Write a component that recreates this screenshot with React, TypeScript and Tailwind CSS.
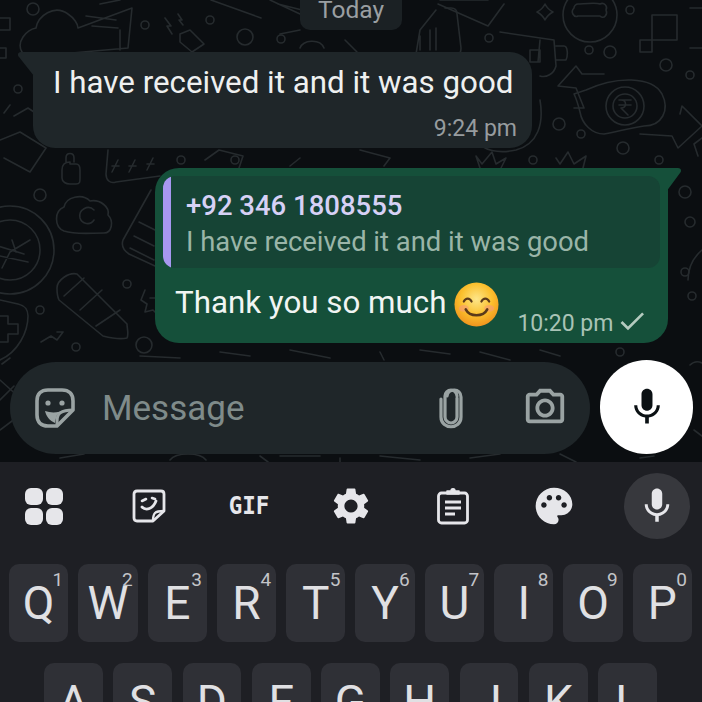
import React from 'react';
import { MdMic, MdOutlineCameraAlt, MdPalette, MdSettings, MdCheck } from 'react-icons/md';

const ROW_ONE = [
  ['Q', '1'], ['W', '2'], ['E', '3'], ['R', '4'], ['T', '5'],
  ['Y', '6'], ['U', '7'], ['I', '8'], ['O', '9'], ['P', '0'],
];
const ROW_TWO = ['A', 'S', 'D', 'F', 'G', 'H', 'J', 'K', 'L'];

const DOT_CIRCLES = [
  [33, 9, 6], [145, 25, 4], [210, 20, 4], [245, 37, 8], [281, 39, 4], [18, 89, 4],
  [181, 160, 4], [235, 160, 4], [40, 195, 6], [77, 247, 4], [127, 284, 4], [40, 310, 4],
  [76, 347, 4], [144, 345, 8], [589, 50, 4], [610, 52, 6], [666, 65, 6], [690, 75, 4],
  [559, 124, 6], [581, 134, 4], [623, 148, 6], [659, 160, 4], [630, 10, 4], [489, 38, 4],
  [685, 192, 6], [690, 222, 5], [685, 272, 4], [692, 296, 4], [533, 160, 4], [620, 352, 4],
];

const Doodles = () => (
  <svg className="absolute inset-0" width="702" height="462" viewBox="0 0 702 462" fill="none" stroke="#262b2e" strokeWidth="1.6" strokeLinecap="round" strokeLinejoin="round">
    {DOT_CIRCLES.map(([cx, cy, r], i) => (
      <circle key={i} cx={cx} cy={cy} r={r} />
    ))}
    {/* top left: squares, heart, gift */}
    <path d="M0 18h10v12H0M0 48h6v10H0" />
    <path d="M22 52c-6-10 4-22 14-24 2-12 18-24 32-14 6 4 10 10 10 14M78 28l54-20-4 40-90 8M86 16l30 4M92 26l26 2M120 30v20M100 4l20-4" />
    {/* bolts and plug */}
    <path d="M165 18l6 8-4 0 5 8M178 14l4 6-3 0 4 5M180 34l10-4 14 14-12 8-12-10z" />
    <path d="M211 0l50 18M270 0l30 14M278 4l24 6M300 30l-20 4" />
    <path d="M300 48c2-8 20-10 24 0M345 40l12 12" />
    {/* left edge card */}
    <path d="M10 105l-6 8M14 116l14-8 6 4 8-6M0 140l20-8 26 16-16 24-26-14" />
    <path d="M70 162c-6 0-8 4-8 8v8c0 4 4 6 8 6h6c4 0 4-2 4-6v-8c0-4-2-6-4-6h-6zM66 162v-4c0-6 8-6 8 0v4" />
    <path d="M108 150l-2 24c0 6 4 10 10 8l44-6M118 160l-6 12M112 166h7M135 160l-6 12M129 166h7M153 158l-6 12M147 164h7" />
    {/* cloud */}
    <path d="M64 231c-10-4-10-20 0-24 2-10 18-14 26-6 10-2 20 6 18 14 6 6 4 18-4 18-14 0-28 2-40-2z" />
    <path d="M94 210c-6-6-16 0-14 8 2 6 10 8 14 2" />
    {/* coin */}
    <circle cx="10" cy="250" r="44" />
    <circle cx="10" cy="250" r="30" />
    <path d="M30 240l-20 12-8 16M12 240l4 12M-2 246l26 8M0 256l28 6" />
    {/* pencil */}
    <path d="M57 288c0-8 12-16 20-14l50 50c0 4 2 10 0 14-8 2-16 0-24-2l-44-36c-2-4-2-8-2-12zM64 296l20-18M80 310l22-20M96 326l24-16" />
    {/* triangle wedge */}
    <path d="M151 190l-28 50c-2 6 0 10 6 14l26 12M139 222l16 8M134 236l20 10M130 248l24 12" />
    <path d="M145 290l-4 10 6 4-2 8 8-2 6 6M150 298l6 0" />
    {/* shield and trend */}
    <path d="M0 300l18 4c8 2 10 6 10 12 0 16-10 36-28 44M0 316h8v8h10v10H8v8H0" />
    <path d="M41 342l10-6 6 4 6-8-6 0" />
    {/* between first bubble and second */}
    <path d="M205 160l14-10 24 6-4 12M360 150l30 8-6 8M300 158l-10 8" />
    <path d="M480 168l-4-12 6 8 10-12 4 12 10-6-6 12" />
    {/* top right */}
    <circle cx="590" cy="15" r="27" />
    <path d="M574 8c-4 4 0 10 4 8l22 0c4 4 8-2 6-6 2-4-2-8-6-6-4-2-18 0-22 0-2 0-4 2-4 4z" />
    <path d="M537 12c4-2 6-4 8-8 2 4 4 6 8 8-4 2-6 4-8 8-2-4-4-6-8-8z" />
    <path d="M640 40h37V15h-25v37h-12zM690 8h14M690 48h12" />
    <path d="M445 8l6 0c4 0 6 2 6 6l4 34c0 8-6 10-10 8M416 54l4-24 16-20M430 50V30M420 50V36M436 50V28" />
    <path d="M440 0l48-0M438 4l50 22 16-22" />
    <path d="M500 32l54 8 2 26c-2 8-10 12-16 10M540 40l-2 22M530 50h10v12h-10zM556 46h8c4 0 4 10 2 14h-10" />
    <path d="M540 100c4 24-2 44-24 50-18 4-34 0-36-8" />
    {/* rupee blob and arrows */}
    <path d="M586 90c30-14 66-14 76 4 8 16 0 32-18 32-14 2-28 6-40 8-12 0-22-10-24-22-2-8-4-14-6-18z" />
    <circle cx="625" cy="106" r="19" />
    <circle cx="625" cy="106" r="12" />
    <path d="M619 100h12M619 105h12M621 100c6 0 6 8 0 8l7 7" />
    <path d="M576 88l-18-2 18-20 6 8h22M576 88l8 20-10 0" />
    <path d="M640 134l32 2 6 12 24-22-20-20-2 8" />
    <path d="M556 158l4 6 8-12 6 12 12-8-4 16" />
    <path d="M702 250a40 40 0 0 0-14 30M702 138l-8 6 4 12" />
    {/* lower strip */}
    <path d="M0 400l14-14M0 380l20 18M10 358l-8 6M0 430l16-12" />
    <path d="M140 356l40 2M220 352l30 4M290 350l40 8M380 352l4 8M420 350l30 4M480 352l30 8M540 350l20 6" />
    <path d="M60 458l24-4M170 460c6-8 30-8 36 0M260 456l8 6M280 456l40 0M340 458v4M380 456l40 4M470 458l30-4M560 454l16 8M640 458l14-2" />
    <path d="M690 365c4-4 8-4 12-2M694 430l8 6" />
  </svg>
);

const Tail = ({ d, className }: { d: string; className: string }) => (
  <svg className={className} width="16" height="24" viewBox="0 0 16 24">
    <path d={d} fill="currentColor" />
  </svg>
);

const StickerFace = () => (
  <svg width="42" height="42" viewBox="0 0 42 42" fill="none" stroke="#9aa3a3" strokeWidth="3.6" strokeLinejoin="round">
    <path d="M14 3h14c7 0 11 4 11 11v9L23 39h-9C7 39 3 35 3 28V14C3 7 7 3 14 3z" />
    <path d="M23 39c0-8 0-10 3-13 3-2 6-3 13-3" strokeWidth="3" />
    <path d="M11 24c6 2 12 2 22-1-2 2-8 3-10 5-1 3-2 6-2 8-5-2-9-7-10-12z" fill="#9aa3a3" stroke="none" />
    <circle cx="14" cy="16" r="2.6" fill="#9aa3a3" stroke="none" />
    <circle cx="28" cy="16" r="2.6" fill="#9aa3a3" stroke="none" />
  </svg>
);

const Clip = () => (
  <svg width="28" height="42" viewBox="0 0 28 42" fill="none" stroke="#9aa3a3" strokeWidth="3.2" strokeLinecap="round">
    <path d="M20 11v19a6 6 0 0 1-12 0V9a6 6 0 0 1 12 0" />
    <path d="M4 12v18c0 13 20 13 20 0V10c0-9-13-9-14-1" />
  </svg>
);

const GridIcon = () => (
  <div className="grid grid-cols-2 gap-[3px] w-[38px]">
    <span className="h-[17px] rounded-[6px] bg-[#e6e6ea]" />
    <span className="h-[17px] rounded-[6px] bg-[#e6e6ea]" />
    <span className="h-[17px] rounded-[6px] bg-[#e6e6ea]" />
    <span className="h-[17px] rounded-[6px] bg-[#e6e6ea]" />
  </div>
);

const NoteIcon = () => (
  <svg width="34" height="34" viewBox="0 0 34 34" fill="none" stroke="#e6e6ea" strokeWidth="2.8" strokeLinejoin="round">
    <path d="M5 2h24c1.500 0 3 1 3 3v17L21 32H5c-2 0-3-1-3-3V5c0-2 1-3 3-3z" />
    <path d="M21 32c0-4 0-6 2-8s5-2 9-2" strokeWidth="2.4" />
    <path d="M10 18c4 4 11 2 14-6" strokeWidth="2.8" strokeLinecap="round" />
    <path d="M10 12l4-2M20 9l3 1" strokeWidth="2.6" strokeLinecap="round" />
  </svg>
);

const ClipboardIcon = () => (
  <svg width="34" height="38" viewBox="0 0 34 38" fill="none" stroke="#e6e6ea" strokeWidth="2.8" strokeLinejoin="round">
    <rect x="2.500" y="6" width="29" height="30" rx="3" />
    <path d="M11 7V4h4c0-3 4-3 4 0h4v3z" fill="#e6e6ea" strokeWidth="1.5" />
    <path d="M9 15h16M9 21h16M9 27h10" strokeWidth="2.800" />
  </svg>
);

const Smile = () => (
  <svg width="45" height="45" viewBox="0 0 46 46">
    <defs>
      <radialGradient id="face" cx="50%" cy="38%" r="65%">
        <stop offset="0%" stopColor="#fde68a" />
        <stop offset="55%" stopColor="#fbc02d" />
        <stop offset="100%" stopColor="#ef8f1c" />
      </radialGradient>
    </defs>
    <circle cx="23" cy="23" r="22.500" fill="url(#face)" />
    <ellipse cx="10" cy="27" rx="5" ry="3.500" fill="#f59a7a" opacity="0.6" />
    <ellipse cx="36" cy="27" rx="5" ry="3.500" fill="#f59a7a" opacity="0.6" />
    <path d="M10 20c2-4 6-4 8 0M28 20c2-4 6-4 8 0" fill="none" stroke="#5b3a1a" strokeWidth="2.200" strokeLinecap="round" />
    <path d="M12 28c4 8 18 8 22 0" fill="none" stroke="#5b3a1a" strokeWidth="2.600" strokeLinecap="round" />
  </svg>
);

const Key = ({ letter, hint }: { letter: string; hint?: string }) => (
  <div className="relative h-[78px] rounded-[10px] bg-[#2f3036] flex items-center justify-center">
    <span className="text-[46px] leading-none font-normal text-[#e0e0e3] font-['Roboto',sans-serif] -mt-[1px]">{letter}</span>
    {hint && (
      <span className="absolute top-[5px] right-[5px] text-[19px] leading-[22px] text-[#c3c4c8] font-['Roboto',sans-serif]">{hint}</span>
    )}
  </div>
);

export default function App() {
  return (
    <div className="relative w-[702px] h-[702px] overflow-hidden bg-[#0b0e11] font-['Roboto',sans-serif]">
      <Doodles />

      <div className="relative flex flex-col h-[462px]">
        {/* Date chip */}
        <div className="self-center -mt-[4px] h-[34px] w-[102px] rounded-b-[10px] bg-[#1b2124] flex items-end justify-center pb-[7px]">
          <span className="text-[24.500px] leading-[26px] text-[#9a9fa2]">Today</span>
        </div>

        {/* Incoming */}
        <div className="relative mt-[22px] ml-[33px] w-[499px] h-[96px] rounded-[22px] rounded-tl-none bg-[#1f2629]">
          <Tail className="absolute -left-[15px] top-0 text-[#1f2629]" d="M16 0H3C0 0-1 3 1 5l15 19z" />
          <p className="pt-[12px] pl-[20px] text-[31.300px] leading-[38px] text-[#eef0f0] whitespace-nowrap">I have received it and it was good</p>
          <span className="absolute right-[15px] bottom-[5px] text-[23px] leading-[28px] text-[#979c9f]">9:24 pm</span>
        </div>

        {/* Outgoing reply */}
        <div className="relative mt-[20px] ml-[155px] w-[513px] h-[175px] rounded-[24px] rounded-tr-none bg-[#15503a] p-[8px] pb-0">
          <Tail className="absolute -right-[14px] top-0 text-[#15503a]" d="M0 0h12c3 0 4 3 2 5L0 24z" />
          <div className="flex h-[92px] rounded-[12px] bg-[#164435] overflow-hidden">
            <div className="w-[8px] bg-[#a798f0]" />
            <div className="pl-[15px] pt-[13px]">
              <div className="text-[27.500px] leading-[34px] font-medium text-[#d6d1f6]">+92 346 1808555</div>
              <div className="mt-[1px] text-[27.400px] leading-[36px] text-[#9ab5a8] whitespace-nowrap">I have received it and it was good</div>
            </div>
          </div>
          <div className="flex items-start pl-[12px] pt-[13px]">
            <span className="text-[31.300px] leading-[44px] text-[#f1f5f3] whitespace-nowrap">Thank you so much</span>
            <span className="ml-[8px] mt-[1px]"><Smile /></span>
            <span className="ml-[18px] mt-[29px] text-[23px] leading-[28px] text-[#a9c3b6] whitespace-nowrap">10:20 pm</span>
            <MdCheck className="ml-[3px] mt-[24px] text-[#b4cbbf]" size={32} />
          </div>
        </div>

        {/* Composer */}
        <div className="flex items-end mt-[17px] ml-[10px] gap-[10px]">
          <div className="flex items-center w-[580px] h-[92px] rounded-[46px] bg-[#1f2629] pl-[24px] pr-[22px]">
            <StickerFace />
            <span className="ml-[26px] text-[35px] leading-none text-[#7f8b8a]">Message</span>
            <span className="ml-auto"><Clip /></span>
            <MdOutlineCameraAlt className="ml-[57px] text-[#9aa3a3]" size={46} />
          </div>
          <div className="w-[93px] h-[94px] rounded-full bg-white flex items-center justify-center">
            <MdMic className="text-[#0b1114]" size={44} />
          </div>
        </div>
      </div>

      {/* Keyboard */}
      <div className="h-[240px] bg-[#1e1f24]">
        <div className="flex items-center h-[88px] mb-[14px] pl-[25px]">
          <GridIcon />
          <span className="ml-[69px]"><NoteIcon /></span>
          <span className="ml-[61px] w-[44px] flex justify-center text-[25px] font-black text-[#e6e6ea] font-['DejaVu_Sans_Mono',monospace] scale-x-90">GIF</span>
          <MdSettings className="ml-[58px] text-[#e6e6ea]" size={44} />
          <span className="ml-[63px]"><ClipboardIcon /></span>
          <MdPalette className="ml-[62px] text-[#e6e6ea]" size={44} />
          <div className="ml-[48px] w-[66px] h-[66px] rounded-full bg-[#37383d] flex items-center justify-center">
            <MdMic className="text-[#e6e6ea]" size={42} />
          </div>
        </div>
        <div className="grid grid-cols-10 gap-x-[10px] pl-[9px] pr-[10px]">
          {ROW_ONE.map(([letter, hint]) => (
            <Key key={letter} letter={letter} hint={hint} />
          ))}
        </div>
        <div className="grid grid-cols-9 gap-x-[10.500px] pl-[44px] pr-[45px] mt-[21px]">
          {ROW_TWO.map((letter) => (
            <Key key={letter} letter={letter} />
          ))}
        </div>
      </div>
    </div>
  );
}
